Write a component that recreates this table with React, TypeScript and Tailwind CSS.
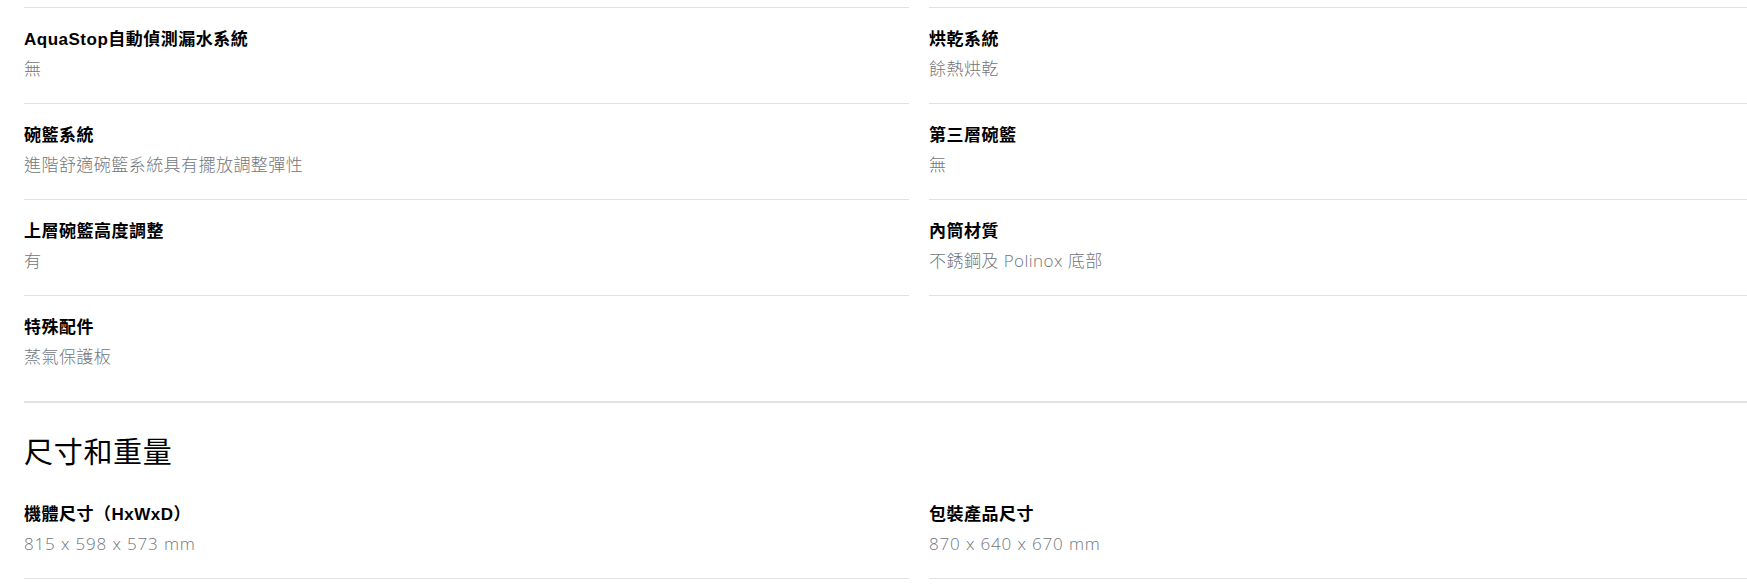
import React from 'react';

interface Spec {
  label: string;
  value: string;
  numeric?: boolean;
}

// 規格資料
const featureSpecs: Spec[] = [
  { label: 'AquaStop自動偵測漏水系統', value: '無' },
  { label: '烘乾系統', value: '餘熱烘乾' },
  { label: '碗籃系統', value: '進階舒適碗籃系統具有擺放調整彈性' },
  { label: '第三層碗籃', value: '無' },
  { label: '上層碗籃高度調整', value: '有' },
  { label: '內筒材質', value: '不銹鋼及 Polinox 底部' },
  { label: '特殊配件', value: '蒸氣保護板' },
];

const sizeSpecs: Spec[] = [
  { label: '機體尺寸（HxWxD）', value: '815 x 598 x 573 mm', numeric: true },
  { label: '包裝產品尺寸', value: '870 x 640 x 670 mm', numeric: true },
];

const SpecItem: React.FC<{ spec: Spec; last?: boolean }> = ({ spec, last }) => (
  <div className={`pt-5 pb-[22px] ${last ? '' : 'border-b border-[#e0e2e5]'}`}>
    <div className="text-[17px] leading-6 font-bold text-black tracking-[0.5px] font-['Liberation_Sans','Noto_Sans_CJK_TC',sans-serif]">
      {spec.label}
    </div>
    <div
      className={`mt-[5px] text-[17px] leading-6 font-light text-[#71767c] font-['Open_Sans','Noto_Sans_CJK_TC',sans-serif] ${
        spec.numeric ? 'tracking-[0.85px]' : 'tracking-[0.45px]'
      }`}
    >
      {spec.value}
    </div>
  </div>
);

const App: React.FC = () => {
  return (
    <div className="w-[1747px] h-[587px] overflow-hidden bg-white">
      <div className="w-[1814px] pl-6">
        {/* 上一段的結尾線 */}
        <div className="grid grid-cols-2 gap-x-5">
          <div className="h-2 border-b border-[#e0e2e5]" />
          <div className="h-2 border-b border-[#e0e2e5]" />
        </div>

        <div className="grid grid-cols-2 gap-x-5 pb-[10px] border-b-2 border-[#e0e2e5]">
          {featureSpecs.map((spec, i) => (
            <SpecItem key={spec.label} spec={spec} last={i === featureSpecs.length - 1} />
          ))}
        </div>

        <h2 className="mt-[30px] mb-[10px] text-[29px] leading-10 font-normal text-black tracking-[0.7px] font-['Liberation_Sans','Noto_Sans_CJK_TC',sans-serif]">
          尺寸和重量
        </h2>

        <div className="grid grid-cols-2 gap-x-5">
          {sizeSpecs.map((spec) => (
            <SpecItem key={spec.label} spec={spec} />
          ))}
        </div>
      </div>
    </div>
  );
};

export default App;
